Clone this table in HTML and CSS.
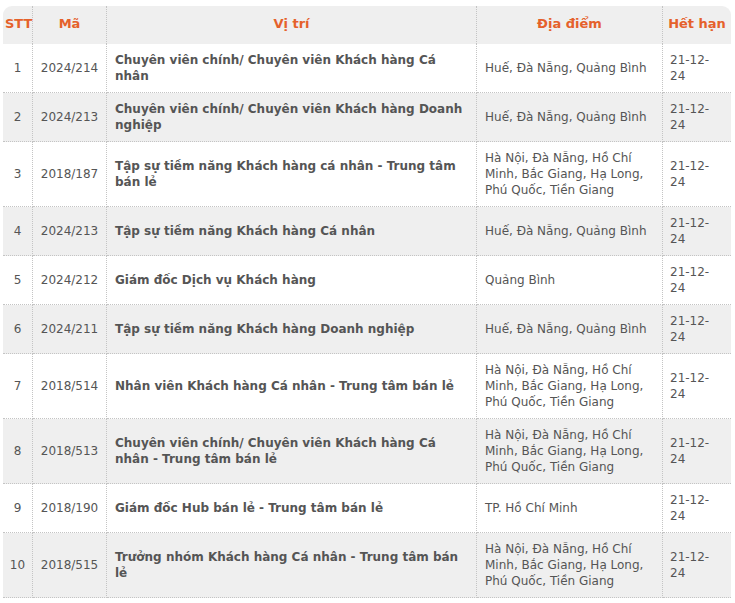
FILE: index.html
```html
<!DOCTYPE html>
<html lang="vi">
<head>
<meta charset="utf-8">
<title>Tuyển dụng</title>
<link rel="stylesheet" href="styles.css">
</head>
<body>
<table class="jobs">
  <colgroup>
    <col class="c-stt"><col class="c-ma"><col class="c-pos"><col class="c-loc"><col class="c-exp">
  </colgroup>
  <thead>
    <tr>
      <th class="stt">STT</th>
      <th>Mã</th>
      <th>Vị trí</th>
      <th>Địa điểm</th>
      <th class="exp">Hết hạn</th>
    </tr>
  </thead>
  <tbody>
    <tr><td class="stt">1</td><td class="ma">2024/214</td><td class="pos">Chuyên viên chính/ Chuyên viên Khách hàng Cá nhân</td><td>Huế, Đà Nẵng, Quảng Bình</td><td class="exp">21-12-24</td></tr>
    <tr><td class="stt">2</td><td class="ma">2024/213</td><td class="pos">Chuyên viên chính/ Chuyên viên Khách hàng Doanh nghiệp</td><td>Huế, Đà Nẵng, Quảng Bình</td><td class="exp">21-12-24</td></tr>
    <tr><td class="stt">3</td><td class="ma">2018/187</td><td class="pos">Tập sự tiềm năng Khách hàng cá nhân - Trung tâm bán lẻ</td><td>Hà Nội, Đà Nẵng, Hồ Chí Minh, Bắc Giang, Hạ Long, Phú Quốc, Tiền Giang</td><td class="exp">21-12-24</td></tr>
    <tr><td class="stt">4</td><td class="ma">2024/213</td><td class="pos">Tập sự tiềm năng Khách hàng Cá nhân</td><td>Huế, Đà Nẵng, Quảng Bình</td><td class="exp">21-12-24</td></tr>
    <tr><td class="stt">5</td><td class="ma">2024/212</td><td class="pos">Giám đốc Dịch vụ Khách hàng</td><td>Quảng Bình</td><td class="exp">21-12-24</td></tr>
    <tr><td class="stt">6</td><td class="ma">2024/211</td><td class="pos">Tập sự tiềm năng Khách hàng Doanh nghiệp</td><td>Huế, Đà Nẵng, Quảng Bình</td><td class="exp">21-12-24</td></tr>
    <tr><td class="stt">7</td><td class="ma">2018/514</td><td class="pos">Nhân viên Khách hàng Cá nhân - Trung tâm bán lẻ</td><td>Hà Nội, Đà Nẵng, Hồ Chí Minh, Bắc Giang, Hạ Long, Phú Quốc, Tiền Giang</td><td class="exp">21-12-24</td></tr>
    <tr><td class="stt">8</td><td class="ma">2018/513</td><td class="pos">Chuyên viên chính/ Chuyên viên Khách hàng Cá nhân - Trung tâm bán lẻ</td><td>Hà Nội, Đà Nẵng, Hồ Chí Minh, Bắc Giang, Hạ Long, Phú Quốc, Tiền Giang</td><td class="exp">21-12-24</td></tr>
    <tr><td class="stt">9</td><td class="ma">2018/190</td><td class="pos">Giám đốc Hub bán lẻ - Trung tâm bán lẻ</td><td>TP. Hồ Chí Minh</td><td class="exp">21-12-24</td></tr>
    <tr><td class="stt">10</td><td class="ma">2018/515</td><td class="pos">Trưởng nhóm Khách hàng Cá nhân - Trung tâm bán lẻ</td><td>Hà Nội, Đà Nẵng, Hồ Chí Minh, Bắc Giang, Hạ Long, Phú Quốc, Tiền Giang</td><td class="exp">21-12-24</td></tr>
  </tbody>
</table>
</body>
</html>
```

FILE: styles.css
```css
html, body {
  margin: 0;
  padding: 0;
  background: #ffffff;
}

body {
  padding: 6px 4px 0 3px;
  font-family: "DejaVu Sans", Verdana, sans-serif;
  font-size: 12px;
  line-height: 16px;
  color: #555555;
}

.jobs {
  width: 728px;
  table-layout: fixed;
  border-collapse: separate;
  border-spacing: 0;
}

.c-stt { width: 30px; }
.c-ma { width: 74px; }
.c-pos { width: 370px; }
.c-loc { width: 186px; }
.c-exp { width: 68px; }

.jobs th {
  background: #efefef;
  color: #e5612b;
  font-weight: bold;
  font-size: 13px;
  text-align: center;
  padding: 10px 2px 12px;
  border-right: 1px dotted #c4c4c4;
  white-space: nowrap;
}

.jobs th:first-child {
  border-top-left-radius: 9px;
}

.jobs th:last-child {
  border-right: none;
  border-top-right-radius: 9px;
}

.jobs td {
  padding: 8px 7px 8px 8px;
  vertical-align: middle;
  text-align: left;
  border-right: 1px dotted #c4c4c4;
  border-bottom: 1px dotted #c4c4c4;
}

.jobs td:last-child {
  border-right: none;
}

.jobs tbody tr:nth-child(even) td {
  background: #efefef;
}

.jobs td.stt,
.jobs td.ma {
  text-align: center;
  padding-left: 2px;
  padding-right: 2px;
}

.jobs td.pos {
  font-weight: bold;
}

.jobs td.exp {
  padding-left: 7px;
  padding-right: 16px;
}
```
